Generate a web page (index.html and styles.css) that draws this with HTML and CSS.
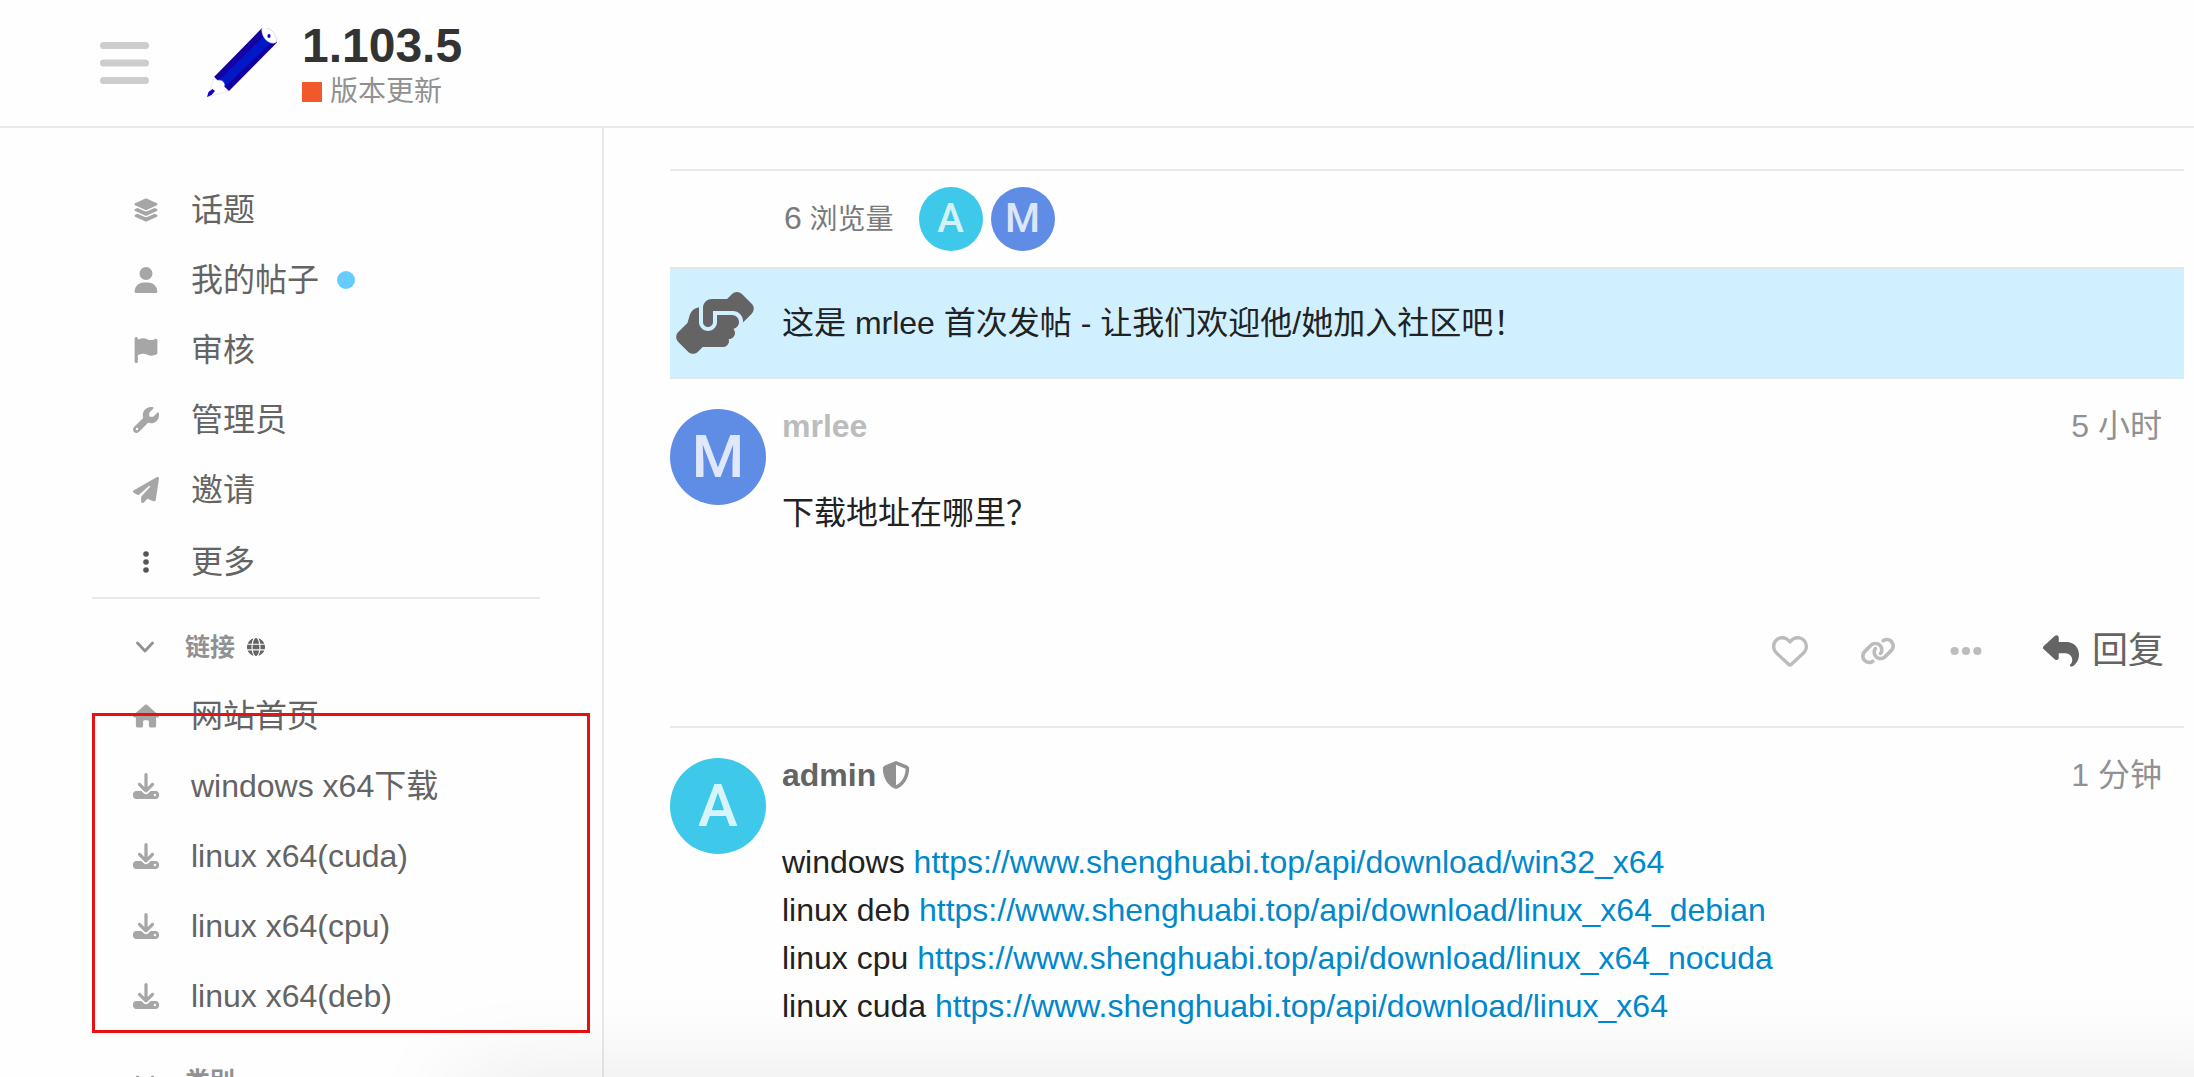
FILE: index.html
```html
<!DOCTYPE html>
<html lang="zh-CN">
<head>
    <meta charset="UTF-8">
    <meta name="viewport" content="width=device-width, initial-scale=1.0">
    <title>1.103.5 - 版本更新</title>
    <link rel="stylesheet" href="styles.css">
</head>
<body>
    <!-- icons used more than once -->
    <svg class="sprite" aria-hidden="true">
        <symbol id="download" viewBox="0 0 512 512"><path d="M288 32c0-17.7-14.3-32-32-32s-32 14.3-32 32V274.7l-73.4-73.4c-12.5-12.5-32.8-12.5-45.3 0s-12.5 32.8 0 45.3l128 128c12.5 12.5 32.8 12.5 45.3 0l128-128c12.5-12.5 12.5-32.8 0-45.3s-32.8-12.5-45.3 0L288 274.7V32zM64 352c-35.3 0-64 28.7-64 64v32c0 35.3 28.7 64 64 64H448c35.3 0 64-28.7 64-64V416c0-35.3-28.7-64-64-64H346.5l-45.3 45.3c-25 25-65.5 25-90.5 0L165.5 352H64zm368 56a24 24 0 1 1 0 48 24 24 0 1 1 0-48z"/></symbol>
        <symbol id="chevron" viewBox="0 0 18 18"><path d="M1.5 5L9 13l7.500-8" fill="none" stroke="currentColor" stroke-width="2.800" stroke-linecap="round" stroke-linejoin="round"/></symbol>
    </svg>

    <header class="header">
        <button class="menu-toggle" type="button" aria-label="菜单">
            <svg viewBox="0 0 49 42"><path d="M3.5 3.5h42M3.5 21h42M3.5 38.5h42" stroke="currentColor" stroke-width="7" stroke-linecap="round"/></svg>
        </button>
        <a class="logo" href="#" aria-label="首页">
            <svg viewBox="0 0 70 70">
                <path d="M55 1L70 15 22 63 15 67 1 69 7 49z" fill="#fff"/>
                <path d="M55 0L70 14.500 22 63 7 49z" fill="#1400a0"/>
                <path d="M56 9L65 14 18 59 11 53z" fill="#0018c8"/>
                <path d="M55 0c-1 4 1 9 4 12s7 4 10 2.500c1-3 0-7-3-10.500s-7-5-11-4z" fill="#fff" stroke="#b8b8dc" stroke-width=".5"/>
                <ellipse cx="62" cy="8" rx="1.600" ry="2" fill="#1400c8"/>
                <path d="M7 49c2 2 2 3 3 3.500 3-1 7 0 7.500 4 0 2-1 4 0 4.500s2 1 3.500 2L1 69z" fill="#fff" stroke="#c8c8e0" stroke-width=".4"/>
                <path d="M0 69l1.500-5 4-3 2.500 2-3.500 4z" fill="#1400c8"/>
            </svg>
        </a>
        <div class="topic-info">
            <h1>1.103.5</h1>
            <a class="category" href="#"><span class="category-box"></span>版本更新</a>
        </div>
    </header>

    <div class="wrap">
        <nav class="sidebar">
            <section class="sidebar-section">
                <a class="row" href="#">
                    <svg class="icon" viewBox="0 0 576 512"><path d="M264.5 5.2c14.9-6.9 32.1-6.9 47 0l218.6 101c8.5 3.9 13.9 12.4 13.9 21.8s-5.4 17.9-13.9 21.8l-218.6 101c-14.9 6.9-32.1 6.9-47 0L45.9 149.8C37.4 145.8 32 137.3 32 128s5.4-17.9 13.9-21.8L264.5 5.2zM476.9 209.6l53.2 24.6c8.5 3.9 13.9 12.4 13.9 21.8s-5.4 17.9-13.9 21.8l-218.6 101c-14.9 6.9-32.1 6.9-47 0L45.9 277.8C37.4 273.8 32 265.3 32 256s5.4-17.9 13.9-21.8l53.2-24.6 152 70.2c23.4 10.8 50.4 10.8 73.8 0l152-70.2zm-152 198.2l152-70.2 53.2 24.6c8.5 3.9 13.9 12.4 13.9 21.8s-5.4 17.9-13.9 21.8l-218.6 101c-14.9 6.9-32.1 6.9-47 0L45.9 405.8C37.4 401.8 32 393.3 32 384s5.4-17.9 13.9-21.8l53.2-24.6 152 70.2c23.4 10.8 50.4 10.8 73.8 0z"/></svg>
                    <span>话题</span>
                </a>
                <a class="row" href="#">
                    <svg class="icon" viewBox="0 0 448 512"><path d="M224 256A128 128 0 1 0 224 0a128 128 0 1 0 0 256zm-45.7 48C79.8 304 0 383.8 0 482.3C0 498.7 13.3 512 29.7 512H418.3c16.4 0 29.7-13.3 29.7-29.7C448 383.8 368.2 304 269.7 304H178.3z"/></svg>
                    <span>我的帖子</span>
                    <span class="unread"></span>
                </a>
                <a class="row" href="#">
                    <svg class="icon" viewBox="0 0 448 512"><path d="M64 32C64 14.3 49.7 0 32 0S0 14.3 0 32V64 368 480c0 17.7 14.3 32 32 32s32-14.3 32-32V352l64.3-16.1c41.1-10.3 84.6-5.5 122.5 13.4c44.2 22.1 95.5 24.8 141.7 7.4l34.7-13c12.5-4.7 20.8-16.6 20.8-30V66.1c0-23-24.2-38-44.8-27.7l-9.6 4.8c-46.3 23.2-100.8 23.2-147.1 0c-35.1-17.6-75.4-22-113.5-12.5L64 48V32z"/></svg>
                    <span>审核</span>
                </a>
                <a class="row" href="#">
                    <svg class="icon" viewBox="0 0 512 512"><path d="M352 320c88.4 0 160-71.6 160-160c0-15.3-2.2-30.1-6.2-44.2c-3.1-10.8-16.4-13.2-24.3-5.3l-76.8 76.8c-3 3-7.1 4.7-11.3 4.7H336c-8.8 0-16-7.2-16-16V118.6c0-4.2 1.7-8.3 4.7-11.3l76.8-76.8c7.9-7.9 5.4-21.2-5.3-24.3C382.1 2.2 367.3 0 352 0C263.6 0 192 71.6 192 160c0 19.1 3.4 37.5 9.5 54.5L19.9 396.1C7.2 408.8 0 426.1 0 444.1C0 481.6 30.4 512 67.9 512c18 0 35.3-7.2 48-19.9L297.5 310.5c17 6.2 35.4 9.5 54.5 9.5zM80 408a24 24 0 1 1 0 48 24 24 0 1 1 0-48z"/></svg>
                    <span>管理员</span>
                </a>
                <a class="row" href="#">
                    <svg class="icon" viewBox="0 0 512 512"><path d="M498.1 5.6c10.1 7 15.4 19.1 13.5 31.2l-64 416c-1.5 9.7-7.4 18.2-16 23s-18.9 5.4-28 1.6L284 427.7l-68.5 74.1c-8.9 9.7-22.9 12.9-35.2 8.1S160 493.2 160 480V396.4c0-4 1.5-7.8 4.2-10.7L331.8 202.8c5.8-6.3 5.6-16-.4-22s-15.7-6.4-22-.7L106 360.8 17.7 316.6C7.1 311.3 .3 300.7 0 288.9s5.9-22.8 16.1-28.7l448-256c10.7-6.1 23.9-5.5 34 1.4z"/></svg>
                    <span>邀请</span>
                </a>
                <button class="row row-more" type="button">
                    <svg class="icon" viewBox="0 0 26 26"><circle cx="13" cy="5" r="2.800"/><circle cx="13" cy="13" r="2.800"/><circle cx="13" cy="21" r="2.800"/></svg>
                    <span>更多</span>
                </button>
            </section>

            <section class="sidebar-section">
                <button class="section-header" type="button">
                    <svg class="chevron"><use href="#chevron"/></svg>
                    <span>链接</span>
                    <svg class="globe" viewBox="0 0 512 512"><path d="M352 256c0 22.2-1.2 43.6-3.3 64H163.3c-2.2-20.4-3.3-41.8-3.3-64s1.2-43.6 3.3-64H348.7c2.2 20.4 3.3 41.8 3.3 64zm28.8-64H503.9c5.3 20.5 8.1 41.9 8.1 64s-2.8 43.5-8.1 64H380.8c2.1-20.6 3.2-42 3.2-64s-1.1-43.4-3.2-64zm112.6-32H376.7c-10-63.9-29.8-117.4-55.3-151.6c78.3 20.7 142 77.5 171.9 151.6zm-149.1 0H167.7c6.1-36.4 15.5-68.6 27-94.7c10.5-23.6 22.2-40.7 33.5-51.5C239.4 3.2 248.7 0 256 0s16.6 3.2 27.8 13.8c11.3 10.8 23 27.9 33.5 51.5c11.6 26 20.9 58.2 27 94.7zm-209 0H18.6C48.6 85.9 112.2 29.1 190.6 8.4C165.1 42.6 145.3 96.1 135.3 160zM8.1 192H131.2c-2.1 20.6-3.2 42-3.2 64s1.1 43.4 3.2 64H8.1C2.8 299.5 0 278.1 0 256s2.8-43.5 8.1-64zM194.7 446.6c-11.6-26-20.9-58.2-27-94.6H344.3c-6.1 36.4-15.5 68.6-27 94.6c-10.5 23.6-22.2 40.7-33.5 51.5C272.6 508.8 263.3 512 256 512s-16.6-3.2-27.8-13.8c-11.3-10.8-23-27.9-33.5-51.5zM135.3 352c10 63.9 29.8 117.4 55.3 151.6C112.2 482.9 48.6 426.1 18.6 352H135.3zm358.1 0c-30 74.1-93.6 130.9-171.9 151.6c25.5-34.2 45.2-87.7 55.3-151.6H493.4z"/></svg>
                </button>
                <a class="row" href="#">
                    <svg class="icon" viewBox="0 0 576 512"><path d="M575.8 255.5c0 18-15 32.1-32 32.1h-32l.7 160.2c0 2.7-.2 5.4-.5 8.1V472c0 22.1-17.9 40-40 40H456c-1.1 0-2.2 0-3.3-.1c-1.4 .1-2.8 .1-4.2 .1H416 392c-22.1 0-40-17.9-40-40V448 384c0-17.7-14.3-32-32-32H256c-17.7 0-32 14.3-32 32v64 24c0 22.1-17.9 40-40 40H160 128.1c-1.5 0-3-.1-4.5-.2c-1.2 .1-2.4 .2-3.6 .2H104c-22.1 0-40-17.9-40-40V360c0-.9 0-1.9 .1-2.8V287.6H32c-18 0-32-14-32-32.1c0-9 3-17 10-24L266.4 8c7-7 15-8 22-8s15 2 21 7L564.8 231.5c8 7 12 15 11 24z"/></svg>
                    <span>网站首页</span>
                </a>
                <a class="row" href="#">
                    <svg class="icon"><use href="#download"/></svg>
                    <span>windows x64下载</span>
                </a>
                <a class="row" href="#">
                    <svg class="icon"><use href="#download"/></svg>
                    <span>linux x64(cuda)</span>
                </a>
                <a class="row" href="#">
                    <svg class="icon"><use href="#download"/></svg>
                    <span>linux x64(cpu)</span>
                </a>
                <a class="row" href="#">
                    <svg class="icon"><use href="#download"/></svg>
                    <span>linux x64(deb)</span>
                </a>
                <div class="highlight"></div>
            </section>

            <section class="sidebar-section">
                <button class="section-header" type="button">
                    <svg class="chevron"><use href="#chevron"/></svg>
                    <span>类别</span>
                </button>
            </section>
        </nav>

        <main class="topic">
            <div class="topic-map">
                <div class="views"><span class="number">6</span> 浏览量</div>
                <div class="users">
                    <a class="avatar small cyan" href="#">A</a>
                    <a class="avatar small blue" href="#">M</a>
                </div>
            </div>

            <div class="notice">
                <svg class="notice-icon" viewBox="0 0 640 512"><path d="M544 248v3.3l69.7-69.7c21.9-21.9 21.9-57.3 0-79.2L535.6 24.4c-21.9-21.9-57.3-21.9-79.2 0L416.3 64.5c-2.7-.3-5.5-.5-8.3-.5H296c-37.1 0-67.6 28-71.6 64H224V248c0 22.1 17.9 40 40 40s40-17.9 40-40V160h160c44.2 0 80 35.8 80 80v8zM336 192v56c0 39.8-32.2 72-72 72s-72-32.2-72-72V129.4c-35.9 6.2-65.8 32.3-76 68.2L99.5 255.2 26.3 328.4c-21.9 21.9-21.9 57.3 0 79.2l78.1 78.1c21.9 21.9 57.3 21.9 79.2 0l37.7-37.7c.9 0 1.8 .1 2.7 .1H384c26.5 0 48-21.5 48-48c0-5.6-1-11-2.7-16H432c26.5 0 48-21.5 48-48c0-12.8-5-24.4-13.2-33c25.7-5 45.1-27.6 45.2-54.8v-.4c-.1-30.8-25.1-55.8-56-55.8H336z"/></svg>
                <p>这是 mrlee 首次发帖 - 让我们欢迎他/她加入社区吧！</p>
            </div>

            <article class="post">
                <a class="avatar blue" href="#">M</a>
                <div class="post-main">
                    <div class="post-head">
                        <a class="username new-user" href="#">mrlee</a>
                        <a class="post-date" href="#">5 小时</a>
                    </div>
                    <div class="cooked">
                        <p>下载地址在哪里？</p>
                    </div>
                    <div class="actions">
                        <button type="button" aria-label="点赞">
                            <svg viewBox="0 0 512 512"><path d="M225.8 468.2l-2.5-2.3L48.1 303.2C17.4 274.7 0 234.7 0 192.8v-3.3c0-70.4 50-130.8 119.2-144C158.6 37.9 198.9 47 231 69.6c9 6.4 17.4 13.8 25 22.3c4.2-4.8 8.7-9.2 13.5-13.3c3.7-3.2 7.5-6.2 11.5-9C313.1 47 353.4 37.9 392.8 45.4C462 58.6 512 119.1 512 189.5v3.3c0 41.9-17.4 81.9-48.1 110.4L288.7 465.9l-2.5 2.3c-8.2 7.6-19 11.9-30.2 11.9s-22-4.2-30.2-11.9zM239.1 145c-.4-.3-.7-.7-1-1.1l-17.8-20c-23.1-25.9-58-37.7-92-31.2C81.6 101.5 48 142.1 48 189.5v3.3c0 28.5 11.9 55.8 32.8 75.2L256 430.7 431.2 268c20.9-19.4 32.8-46.7 32.8-75.2v-3.3c0-47.3-33.6-88-80.1-96.9c-34-6.5-69 5.4-92 31.2l-17.8 20c-.3 .4-.7 .7-1 1.1c-4.5 4.5-10.6 7-16.9 7s-12.4-2.5-16.9-7z"/></svg>
                        </button>
                        <button type="button" aria-label="分享">
                            <svg viewBox="0 0 640 512"><path d="M579.8 267.7c56.5-56.5 56.5-148 0-204.5c-50-50-128.8-56.5-186.3-15.4l-1.6 1.1c-14.4 10.3-17.7 30.3-7.4 44.6s30.3 17.7 44.6 7.4l1.6-1.1c32.1-22.9 76-19.3 103.8 8.6c31.5 31.5 31.5 82.5 0 114L422.3 334.8c-31.5 31.5-82.5 31.5-114 0c-27.9-27.9-31.5-71.8-8.6-103.8l1.1-1.6c10.3-14.4 6.9-34.4-7.4-44.6s-34.4-6.9-44.6 7.4l-1.1 1.6C206.5 251.2 213 330 263 380c56.5 56.5 148 56.5 204.5 0L579.8 267.7zM60.2 244.3c-56.5 56.5-56.5 148 0 204.5c50 50 128.8 56.5 186.3 15.4l1.6-1.1c14.4-10.3 17.7-30.3 7.4-44.6s-30.3-17.7-44.6-7.4l-1.6 1.1c-32.1 22.9-76 19.3-103.8-8.6C74 372 74 321 105.5 289.5L217.7 177.2c31.5-31.5 82.5-31.5 114 0c27.9 27.9 31.5 71.8 8.6 103.9l-1.1 1.6c-10.3 14.4-6.9 34.4 7.4 44.6s34.4 6.9 44.6-7.4l1.1-1.6C433.5 260.8 427 182 377 132c-56.5-56.5-148-56.5-204.5 0L60.2 244.3z"/></svg>
                        </button>
                        <button type="button" aria-label="显示更多">
                            <svg viewBox="0 0 512 512"><circle cx="94" cy="256" r="58"/><circle cx="256" cy="256" r="58"/><circle cx="418" cy="256" r="58"/></svg>
                        </button>
                        <button class="reply" type="button">
                            <svg viewBox="0 0 512 512"><path d="M205 34.8c11.5 5.1 19 16.6 19 29.2v64H336c97.2 0 176 78.8 176 176c0 113.3-81.5 163.9-100.2 174.1c-2.5 1.4-5.3 1.9-8.1 1.9c-10.9 0-19.7-8.9-19.7-19.7c0-7.5 4.3-14.4 9.8-19.5c9.4-8.8 22.2-26.4 22.2-56.7c0-53-43-96-96-96H224v64c0 12.6-7.4 24.1-19 29.2s-25 3-34.4-5.4l-160-144C3.9 225.7 0 217.1 0 208s3.9-17.7 10.6-23.8l160-144c9.4-8.5 22.9-10.6 34.4-5.4z"/></svg>
                            回复
                        </button>
                    </div>
                </div>
            </article>

            <article class="post">
                <a class="avatar cyan" href="#">A</a>
                <div class="post-main">
                    <div class="post-head">
                        <a class="username" href="#">admin</a>
                        <svg class="shield" viewBox="0 0 512 512"><path d="M256 0c4.6 0 9.2 1 13.4 2.9L457.7 82.8c22 9.3 38.4 31 38.3 57.2c-.5 99.2-41.3 280.7-213.6 363.2c-16.7 8-36.1 8-52.8 0C57.3 420.7 16.5 239.2 16 140c-.1-26.2 16.3-47.9 38.3-57.2L242.7 2.9C246.8 1 251.4 0 256 0zm0 66.8V444.8C394 378 431.1 230.1 432 141.4L256 66.8z"/></svg>
                        <a class="post-date" href="#">1 分钟</a>
                    </div>
                    <div class="cooked">
                        <p>windows <a href="#">https://www.shenghuabi.top/api/download/win32_x64</a><br>
                        linux deb <a href="#">https://www.shenghuabi.top/api/download/linux_x64_debian</a><br>
                        linux cpu <a href="#">https://www.shenghuabi.top/api/download/linux_x64_nocuda</a><br>
                        linux cuda <a href="#">https://www.shenghuabi.top/api/download/linux_x64</a></p>
                    </div>
                </div>
            </article>
        </main>
    </div>

    <div class="bottom-panel"></div>
</body>
</html>
```
FILE: styles.css
```css
* {
    box-sizing: border-box;
}
body {
    margin: 0;
    height: 100vh;
    display: flex;
    flex-direction: column;
    overflow: hidden;
    background: #fefefe;
    color: #222;
    font-family: "Liberation Sans", "Noto Sans CJK SC", sans-serif;
    font-size: 32px;
    line-height: 48px;
}
a {
    color: inherit;
    text-decoration: none;
}
button {
    padding: 0;
    border: 0;
    background: none;
    color: inherit;
    font: inherit;
    cursor: pointer;
}
p {
    margin: 0;
}
svg {
    display: block;
    flex: none;
    fill: currentColor;
}
.sprite {
    position: absolute;
    width: 0;
    height: 0;
}

/* header */
.header {
    flex: none;
    display: flex;
    align-items: center;
    height: 128px;
    padding-left: 100px;
    border-bottom: 2px solid #e9e9e9;
}
.menu-toggle {
    color: #cdcdcd;
}
.menu-toggle svg {
    width: 49px;
    height: 42px;
}
.logo {
    margin: 0 25px 0 58px;
}
.logo svg {
    width: 70px;
    height: 70px;
}
.topic-info {
    padding-top: 5px;
}
.topic-info h1 {
    margin: 0;
    color: #333;
    font-size: 48px;
    line-height: 52px;
}
.category {
    display: flex;
    align-items: center;
    gap: 8px;
    color: #919191;
    font-size: 28px;
    line-height: 40px;
}
.category-box {
    width: 20px;
    height: 20px;
    background: #f1592a;
}

/* sidebar */
.wrap {
    flex: 1;
    display: flex;
    min-height: 0;
}
.sidebar {
    flex: none;
    width: 604px;
    padding: 47px 62px 0 92px;
    border-right: 2px solid #e9e9e9;
    color: #646464;
}
.sidebar-section {
    position: relative;
    border-bottom: 2px solid #e9e9e9;
}
.row {
    display: flex;
    align-items: center;
    width: 100%;
    height: 70px;
    padding-left: 41px;
}
.row-more {
    margin-top: 2px;
}
.icon {
    width: 26px;
    height: 26px;
    margin-right: 32px;
    color: #a6a6a6;
}
.row-more .icon {
    color: #555;
}
.unread {
    width: 18px;
    height: 18px;
    margin-left: 18px;
    border-radius: 50%;
    background: #66ccff;
}
.section-header {
    display: flex;
    align-items: center;
    width: 100%;
    height: 68px;
    margin-top: 14px;
    padding-left: 44px;
    color: #919191;
    font-size: 25px;
    font-weight: bold;
}
.chevron {
    width: 18px;
    height: 18px;
    margin-right: 31px;
}
.globe {
    width: 18px;
    height: 18px;
    margin-left: 12px;
    color: #646464;
}
/* red marker drawn over the download links */
.highlight {
    position: absolute;
    left: 0;
    right: -50px;
    top: 100px;
    bottom: -2px;
    border: 3px solid #e81010;
}

/* topic */
.topic {
    flex: 1;
    min-width: 0;
    padding: 41px 10px 0 66px;
}
.topic-map {
    display: flex;
    align-items: center;
    gap: 25px;
    height: 98px;
    padding-left: 114px;
    border-top: 2px solid #e9e9e9;
}
.views {
    color: #7a7a7a;
    font-size: 28px;
}
.number {
    font-size: 32px;
}
.users {
    display: flex;
    gap: 8px;
}
.avatar {
    flex: none;
    width: 96px;
    height: 96px;
    border-radius: 50%;
    color: rgba(255, 255, 255, 0.8);
    font-family: Roboto, "Liberation Sans", sans-serif;
    font-size: 60px;
    font-weight: 500;
    line-height: 96px;
    text-align: center;
}
.avatar.small {
    width: 64px;
    height: 64px;
    font-size: 40px;
    line-height: 64px;
}
.cyan {
    background: #3ec8e9;
}
.blue {
    background: #5f8ce4;
}
.notice {
    display: flex;
    align-items: center;
    gap: 27px;
    height: 112px;
    padding-left: 5px;
    border: solid #dfe8eb;
    border-width: 2px 0;
    background: #d1f0ff;
}
.notice-icon {
    width: 80px;
    height: 64px;
    color: #646464;
}
.post {
    display: flex;
    gap: 16px;
    padding: 30px 0 45px;
    border-top: 2px solid #e9e9e9;
}
.notice + .post {
    border-top: 0;
}
.post-main {
    flex: 1;
    min-width: 0;
}
.post-head {
    display: flex;
    align-items: center;
    height: 34px;
    padding-right: 22px;
}
.username {
    color: #646464;
    font-weight: bold;
}
.new-user {
    color: #bcbcbc;
}
.shield {
    width: 28px;
    height: 28px;
    margin-left: 6px;
    color: #919191;
}
.post-date {
    margin-left: auto;
    color: #919191;
}
.cooked {
    padding-top: 46px;
}
.cooked a {
    color: #0088cc;
}
.actions {
    display: flex;
    justify-content: flex-end;
    height: 60px;
    margin-top: 84px;
    padding-right: 20px;
    color: #bcbcbc;
}
.actions button {
    display: flex;
    align-items: center;
    justify-content: center;
    width: 88px;
}
.actions svg {
    width: 36px;
    height: 36px;
}
.actions .reply {
    gap: 13px;
    width: auto;
    padding-left: 33px;
    color: #646464;
    font-size: 36px;
}

/* docked panel just below the fold, only its shadow shows */
.bottom-panel {
    position: fixed;
    left: 460px;
    right: -100px;
    bottom: -60px;
    height: 40px;
    box-shadow: 0 0 100px rgba(0, 0, 0, 0.18);
}
```
